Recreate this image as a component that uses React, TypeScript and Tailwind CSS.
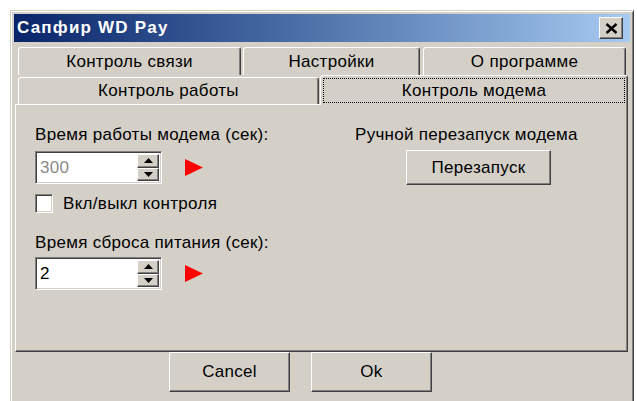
import React from 'react';

const FONT = { fontFamily: '"Liberation Sans", Arial, sans-serif' };

// raised 3D edge used by buttons, tabs and the window frame
const raised =
  'border border-t-white border-l-white border-r-[#404040] border-b-[#404040] shadow-[inset_-1px_-1px_0_#808080]';
const sunken =
  'border border-t-[#808080] border-l-[#808080] border-r-white border-b-white shadow-[inset_1px_1px_0_#404040,inset_-1px_-1px_0_#d4d0c8]';

function Arrow({ up }: { up?: boolean }) {
  return (
    <svg width="9" height="5" viewBox="0 0 9 5">
      {up ? <polygon points="4.5,0 9,5 0,5" fill="#000" /> : <polygon points="0,0 9,0 4.5,5" fill="#000" />}
    </svg>
  );
}

function SpinBox({ value, muted }: { value: string; muted?: boolean }) {
  return (
    <div className={`flex h-[33px] w-[127px] bg-white p-[2px] ${sunken}`}>
      <div className={`flex flex-1 items-center pl-[2px] text-[17px] ${muted ? 'text-[#8a8a8a]' : 'text-black'}`}>{value}</div>
      <div className="flex w-[22px] flex-col">
        <div className={`flex flex-1 items-center justify-center bg-[#d4d0c8] ${raised}`}>
          <Arrow up />
        </div>
        <div className={`flex flex-1 items-center justify-center bg-[#d4d0c8] ${raised}`}>
          <Arrow />
        </div>
      </div>
    </div>
  );
}

function RedArrow() {
  return (
    <svg width="18" height="17" viewBox="0 0 18 17" className="ml-[23px]">
      <polygon points="0,0 18,8.5 0,17" fill="#ff0000" />
    </svg>
  );
}

function Button({ label, className = '' }: { label: string; className?: string }) {
  return (
    <div className={`flex items-center justify-center bg-[#d4d0c8] text-[17px] tracking-[0.3px] text-black ${raised} ${className}`}>
      {label}
    </div>
  );
}

function Tab({ label, w, className = '' }: { label: string; w: string; className?: string }) {
  return (
    <div
      className={`flex items-center justify-center rounded-t-[3px] border-t border-l border-r border-t-white border-l-white border-r-[#404040] bg-[#d4d0c8] text-[17px] tracking-[0.3px] text-black shadow-[inset_-1px_0_0_#808080] ${w} ${className}`}
    >
      {label}
    </div>
  );
}

export default function App() {
  return (
    <div className="h-[401px] w-[637px] overflow-hidden bg-white pl-[10px] pt-[10px]" style={FONT}>
      <div className="h-[400px] w-[624px] border border-t-[#d4d0c8] border-l-[#d4d0c8] border-r-[#404040] border-b-[#404040] bg-[#d4d0c8] p-[3px] shadow-[inset_1px_1px_0_#fff,inset_-1px_-1px_0_#808080]">
        {/* caption */}
        <div className="flex h-[28px] items-center justify-between bg-gradient-to-r from-[#0a246a] to-[#a6caf0] pl-[3px] pr-[7px]">
          <span className="text-[17px] font-bold tracking-[1.2px] text-white">Сапфир WD Pay</span>
          <div className={`flex h-[22px] w-[24px] items-center justify-center bg-[#d4d0c8] ${raised}`}>
            <svg width="13" height="11" viewBox="0 0 13 11">
              <path d="M1.5 1 L11.5 10 M11.5 1 L1.5 10" stroke="#000" strokeWidth="2.4" />
            </svg>
          </div>
        </div>

        {/* tab control */}
        <div className="ml-[1px] mt-[5px] w-[613px]">
          <div className="flex h-[28px] items-stretch gap-[2px] pl-[3px]">
            <Tab label="Контроль связи" w="w-[223px]" />
            <Tab label="Настройки" w="w-[177px]" />
            <Tab label="О программе" w="w-[203px]" className="ml-[1px]" />
          </div>
          <div className="flex h-[29px] items-end gap-[1px] pl-[3px]">
            <Tab label="Контроль работы" w="w-[301px]" className="h-[27px]" />
            <div className="relative z-10 -mb-[1px] h-[30px] w-[308px] rounded-t-[3px] border-t border-l border-r border-t-white border-l-white border-r-[#404040] bg-[#d4d0c8] p-[2px] shadow-[inset_-1px_0_0_#808080]">
              <div className="flex h-full items-center justify-center border border-dotted border-black text-[17px] tracking-[0.3px] text-black">
                Контроль модема
              </div>
            </div>
          </div>

          {/* page */}
          <div className="flex h-[248px] border border-t-white border-l-white border-r-[#404040] border-b-[#404040] pl-[19px] pt-[19px] shadow-[inset_-1px_-1px_0_#808080]">
            <div className="flex w-[320px] flex-col text-[17px] tracking-[0.3px] text-black">
              <span className="leading-[21px]">Время работы модема (сек):</span>
              <div className="mt-[6px] flex items-center">
                <SpinBox value="300" muted />
                <RedArrow />
              </div>
              <div className="mt-[10px] flex items-center">
                <div className={`h-[19px] w-[18px] bg-white ${sunken}`} />
                <span className="ml-[10px] leading-[19px]">Вкл/выкл контроля</span>
              </div>
              <span className="mt-[19px] leading-[21px]">Время сброса питания (сек):</span>
              <div className="mt-[4px] flex items-center">
                <SpinBox value="2" />
                <RedArrow />
              </div>
            </div>
            <div className="flex flex-col items-start text-[17px] tracking-[0.3px] text-black">
              <span className="leading-[21px]">Ручной перезапуск модема</span>
              <Button label="Перезапуск" className="ml-[51px] mt-[5px] h-[35px] w-[145px]" />
            </div>
          </div>
        </div>

        {/* dialog buttons */}
        <div className="flex gap-[21px] pl-[155px]">
          <Button label="Cancel" className="h-[40px] w-[121px]" />
          <Button label="Ok" className="h-[40px] w-[121px]" />
        </div>
      </div>
    </div>
  );
}
